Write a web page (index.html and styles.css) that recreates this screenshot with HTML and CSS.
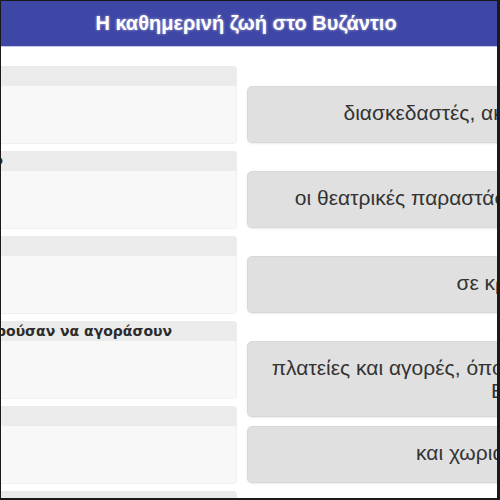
FILE: index.html
```html
<!DOCTYPE html>
<html lang="el">
<head>
    <meta charset="UTF-8">
    <title>Η καθημερινή ζωή στο Βυζάντιο</title>
    <link rel="stylesheet" href="styles.css">
</head>
<body>
<div class="frame">
    <div class="topbar">Η καθημερινή ζωή στο Βυζάντιο</div>
    <div class="rows">
        <div class="row">
            <div class="card">
                <div class="card_head"></div>
                <div class="card_body"></div>
            </div>
            <div class="choice">διασκεδαστές, ακροβάτες και γελωτοποιοί</div>
        </div>
        <div class="row">
            <div class="card">
                <div class="card_head card_head_edge">Πού διασκέδαζαν</div>
                <div class="card_body"></div>
            </div>
            <div class="choice">οι θεατρικές παραστάσεις και όλες οι αρματοδρομίες</div>
        </div>
        <div class="row">
            <div class="card">
                <div class="card_head"></div>
                <div class="card_body"></div>
            </div>
            <div class="choice">σε κρασοπουλειά</div>
        </div>
        <div class="row">
            <div class="card">
                <div class="card_head">Τι μπορούσαν να αγοράσουν</div>
                <div class="card_body"></div>
            </div>
            <div class="choice">πλατείες και αγορές, όπου συγκεντρώνονταν κάτοικοι του<br>Βυζαντίου</div>
        </div>
        <div class="row">
            <div class="card">
                <div class="card_head"></div>
                <div class="card_body"></div>
            </div>
            <div class="choice">και χωριά της περιφέρειας</div>
        </div>
        <div class="row">
            <div class="card">
                <div class="card_head"></div>
                <div class="card_body"></div>
            </div>
        </div>
    </div>
</div>
</body>
</html>
```

FILE: styles.css
```css
html, body {
    margin: 0;
    padding: 0;
    background-color: #ffffff;
}

body {
    font-family: "Liberation Sans", Arial, sans-serif;
    color: #333333;
}

.frame {
    box-sizing: border-box;
    width: 500px;
    height: 500px;
    overflow: hidden;
    border-top: 1px solid #1a1a1a;
    border-left: 1px solid #1a1a1a;
    border-right: 3px solid #1a1a1a;
    border-bottom: 2px solid #1a1a1a;
}

.topbar {
    height: 45px;
    line-height: 44px;
    padding-right: 6px;
    text-align: center;
    background-color: #3e46a6;
    border-bottom: 1px solid #c6c9ea;
    color: #ffffff;
    font-size: 20px;
    font-weight: bold;
    text-shadow: 0 0 3px rgba(255, 255, 255, 0.6);
}

.rows {
    display: flex;
    flex-direction: column;
    gap: 7px;
    padding-top: 19px;
}

.row {
    display: flex;
    height: 78px;
    gap: 10px;
}

.card {
    flex: none;
    width: 297px;
    margin-left: -61px;
    border-radius: 4px;
    overflow: hidden;
}

.card_head {
    display: flex;
    justify-content: flex-end;
    height: 20px;
    line-height: 20px;
    padding-right: 65px;
    background-color: #ebebeb;
    font-family: "DejaVu Sans", sans-serif;
    font-size: 14px;
    font-weight: bold;
    white-space: nowrap;
    color: #2b2b2b;
}

.card_head_edge {
    padding-right: 234px;
}

.card_body {
    height: 58px;
    background-color: #f8f8f8;
    border: 1px solid #f0f0f0;
    border-top: none;
    box-sizing: border-box;
}

.choice {
    flex: none;
    box-sizing: border-box;
    width: 580px;
    min-height: 57px;
    align-self: flex-start;
    margin-top: 20px;
    padding: 14px 10px;
    border-radius: 5px;
    background-color: #e0e0e0;
    border: 1px solid #d8d8d8;
    box-shadow: 0 1px 2px rgba(0, 0, 0, 0.08);
    font-size: 21px;
    line-height: 23px;
    text-align: center;
    white-space: nowrap;
}
```
